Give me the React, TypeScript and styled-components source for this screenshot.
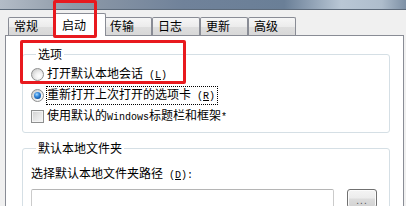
import React from "react";
import styled, { createGlobalStyle, css } from "styled-components";

const Global = createGlobalStyle`
  html, body { margin: 0; padding: 0; background: #f0f0f0; overflow: hidden; }
  * { box-sizing: border-box; }
`;

const FONT = `"Noto Sans CJK SC", "Noto Sans", sans-serif`;

const Window = styled.div`
  position: relative;
  width: 406px;
  height: 206px;
  overflow: hidden;
  background: #f0f0f0;
  font-family: ${FONT};
  font-size: 12px;
  color: #000;
`;

const TitleStrip = styled.div`
  height: 10px;
  background: linear-gradient(90deg, #b3bcc7 0%, #8e9aa8 18%, #70829a 45%, #6a7f97 70%, #b9c7d5 84%, #aebdcc 94%, #7d90a5 100%);
  border-bottom: 1px solid #5c6a7a;
`;

const TabRow = styled.div`
  display: flex;
  align-items: flex-end;
  height: 22px;
  margin-top: 3px;
  padding-left: 8px;
  position: relative;
  z-index: 1;
`;

const Tab = styled.div<{ $active?: boolean }>`
  width: 48px;
  height: 18px;
  padding-left: 5px;
  line-height: 16px;
  border: 1px solid #898c95;
  border-bottom: none;
  border-radius: 2px 2px 0 0;
  background: linear-gradient(180deg, #f6f6f6 0%, #ececec 50%, #dedede 51%, #d8d8d8 100%);
  white-space: nowrap;
  ${(p) =>
    p.$active &&
    css`
      width: 52px;
      height: 23px;
      margin: 0 -2px -1px;
      padding-left: 7px;
      line-height: 16px;
      padding-top: 3px;
      background: #fff;
      position: relative;
    `}
`;

const Panel = styled.div`
  margin-left: 5px;
  width: 399px;
  height: 200px;
  background: #fff;
  border: 1px solid #898c95;
  border-bottom: none;
  padding: 12px 13px 0 16px;
`;

const Group = styled.fieldset<{ $gap?: number }>`
  margin: ${(p) => p.$gap ?? 0}px 0 0 0;
  padding: 4px 0 5px 8px;
  border: 1px solid #d5dfe5;
  border-radius: 3px;
  min-width: 0;
`;

const GroupTitle = styled.legend`
  margin-left: 5px;
  padding: 0 2px;
  line-height: 12px;
  font-size: 12px;
`;

const OptionRow = styled.div`
  display: flex;
  align-items: center;
  height: 20px;
  margin-bottom: 1px;
  gap: 3px;
  white-space: nowrap;
`;

const Radio = styled.span<{ $checked?: boolean }>`
  position: relative;
  flex: none;
  width: 13px;
  height: 13px;
  border-radius: 50%;
  border: 1px solid #8e8f8f;
  background: radial-gradient(circle at 65% 65%, #ffffff 0%, #f1f1f1 35%, #d2d2d2 75%, #bdbdbd 100%);
  ${(p) =>
    p.$checked &&
    css`
      &::after {
        content: "";
        position: absolute;
        left: 2px;
        top: 2px;
        width: 7px;
        height: 7px;
        border-radius: 50%;
        background: radial-gradient(circle at 40% 35%, #a9dcff 0%, #3b8ee0 35%, #145aa8 70%, #0b2f63 100%);
      }
    `}
`;

const Check = styled.span`
  flex: none;
  width: 13px;
  height: 13px;
  border: 1px solid #8e8f8f;
  background: linear-gradient(135deg, #cfcfcf 0%, #e6e6e6 50%, #f7f7f7 100%);
  box-shadow: inset 0 0 0 1px #f4f4f4;
`;

const Label = styled.span<{ $focused?: boolean }>`
  line-height: 12px;
  padding: 1px 1px 0 0;
  ${(p) =>
    p.$focused &&
    css`
      outline: 1px dotted #000;
      outline-offset: 0px;
      padding: 1px 2px 1px 0;
    `}
`;

const Latin = styled.span`
  font-family: "Liberation Mono", "DejaVu Sans Mono", monospace;
  font-size: 10px;
`;

const Key = styled.span`
  text-decoration: underline;
`;

const FieldLabel = styled.div`
  margin-top: 9px;
  line-height: 12px;
  white-space: nowrap;
`;

const FieldRow = styled.div`
  display: flex;
  align-items: flex-start;
  gap: 13px;
  margin-top: 7px;
`;

const TextBox = styled.div`
  width: 303px;
  height: 20px;
  border: 1px solid #cbcbcb;
  border-top-color: #b5b5b5;
  border-radius: 2px;
  background: #fff;
`;

const BrowseButton = styled.div`
  width: 30px;
  height: 19px;
  border: 1px solid #707070;
  border-radius: 3px;
  background: linear-gradient(180deg, #f4f4f4 0%, #ececec 48%, #dddddd 52%, #d2d2d2 100%);
  box-shadow: inset 0 0 0 1px #fbfbfb;
  display: flex;
  align-items: flex-end;
  justify-content: center;
  font-family: "Liberation Sans", sans-serif;
  font-size: 10px;
  line-height: 13px;
  color: #555;
  letter-spacing: 1px;
`;

const Highlight = styled.div<{ $x: number; $y: number; $w: number; $h: number }>`
  position: absolute;
  left: ${(p) => p.$x}px;
  top: ${(p) => p.$y}px;
  width: ${(p) => p.$w}px;
  height: ${(p) => p.$h}px;
  border: 3px solid #e8191e;
  border-radius: 2px;
  z-index: 5;
  pointer-events: none;
`;

const tabs = ["常规", "启动", "传输", "日志", "更新", "高级"];

export default function App() {
  return (
    <Window>
      <Global />
      <TitleStrip />
      <TabRow>
        {tabs.map((t) => (
          <Tab key={t} $active={t === "启动"}>
            {t}
          </Tab>
        ))}
      </TabRow>
      <Panel>
        <Group>
          <GroupTitle>选项</GroupTitle>
          <OptionRow>
            <Radio />
            <Label>
              打开默认本地会话<Latin> (<Key>L</Key>)</Latin>
            </Label>
          </OptionRow>
          <OptionRow>
            <Radio $checked />
            <Label $focused>
              重新打开上次打开的选项卡<Latin> (<Key>R</Key>)</Latin>
            </Label>
          </OptionRow>
          <OptionRow>
            <Check />
            <Label>
              使用默认的<Latin>Windows</Latin>标题栏和框架<Latin>*</Latin>
            </Label>
          </OptionRow>
        </Group>
        <Group $gap={9}>
          <GroupTitle>默认本地文件夹</GroupTitle>
          <FieldLabel>
            选择默认本地文件夹路径<Latin> (<Key>D</Key>):</Latin>
          </FieldLabel>
          <FieldRow>
            <TextBox />
            <BrowseButton>...</BrowseButton>
          </FieldRow>
        </Group>
      </Panel>
      <Highlight $x={53} $y={0} $w={44} $h={38} />
      <Highlight $x={20} $y={40} $w={166} $h={44} />
    </Window>
  );
}
